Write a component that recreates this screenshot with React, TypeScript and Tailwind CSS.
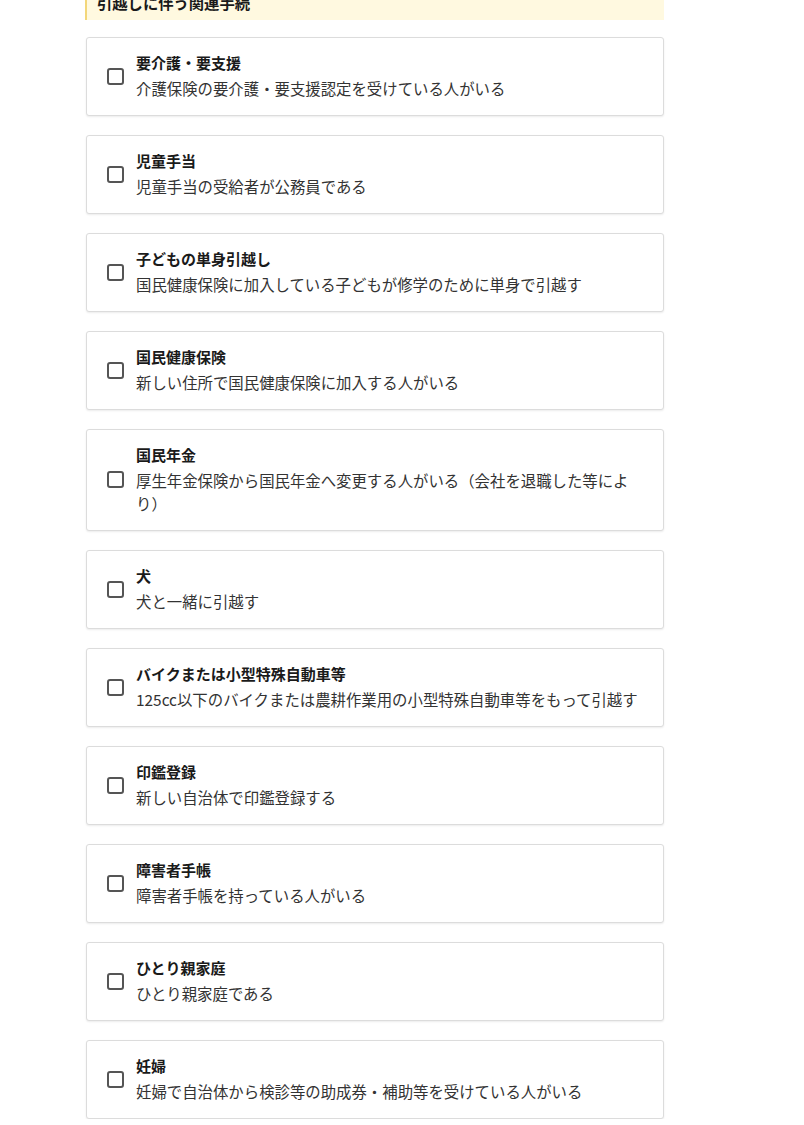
const items: { title: string; desc: string }[] = [
  { title: "要介護・要支援", desc: "介護保険の要介護・要支援認定を受けている人がいる" },
  { title: "児童手当", desc: "児童手当の受給者が公務員である" },
  { title: "子どもの単身引越し", desc: "国民健康保険に加入している子どもが修学のために単身で引越す" },
  { title: "国民健康保険", desc: "新しい住所で国民健康保険に加入する人がいる" },
  { title: "国民年金", desc: "厚生年金保険から国民年金へ変更する人がいる（会社を退職した等により）" },
  { title: "犬", desc: "犬と一緒に引越す" },
  { title: "バイクまたは小型特殊自動車等", desc: "125cc以下のバイクまたは農耕作業用の小型特殊自動車等をもって引越す" },
  { title: "印鑑登録", desc: "新しい自治体で印鑑登録する" },
  { title: "障害者手帳", desc: "障害者手帳を持っている人がいる" },
  { title: "ひとり親家庭", desc: "ひとり親家庭である" },
  { title: "妊婦", desc: "妊婦で自治体から検診等の助成券・補助等を受けている人がいる" },
];

export default function App() {
  return (
    <div
      className="min-h-[1125px] bg-white text-[#1a1a1a]"
      style={{ fontFamily: '"Noto Sans CJK JP", "Noto Sans", sans-serif' }}
    >
      <div className="ml-[85px] w-[579px]">
        <div className="-mt-[13px] border-l-2 border-[#f3d77a] bg-[#fff9e0] pl-[10px] pt-[4px] pb-[6px] text-[15.3px] font-bold leading-[23px]">
          引越しに伴う関連手続
        </div>
        <ul className="mt-[17px] flex flex-col gap-[19px] pl-px">
          {items.map((item) => (
            <li key={item.title}>
              <label className="flex items-center rounded-[3px] border border-[#dcdcdc] bg-white pt-[14px] pb-[15px] pl-[20px] pr-[18px] shadow-[0_1px_2px_rgba(0,0,0,0.08)]">
                <span className="h-[17px] w-[17px] shrink-0 rounded-[3px] border-2 border-[#555]" />
                <span className="ml-[12px] flex flex-col">
                  <span className="text-[15px] font-bold leading-[22px]">{item.title}</span>
                  <span className="mt-[3px] text-[15.4px] leading-[23px] text-[#333]">{item.desc}</span>
                </span>
              </label>
            </li>
          ))}
        </ul>
      </div>
    </div>
  );
}
